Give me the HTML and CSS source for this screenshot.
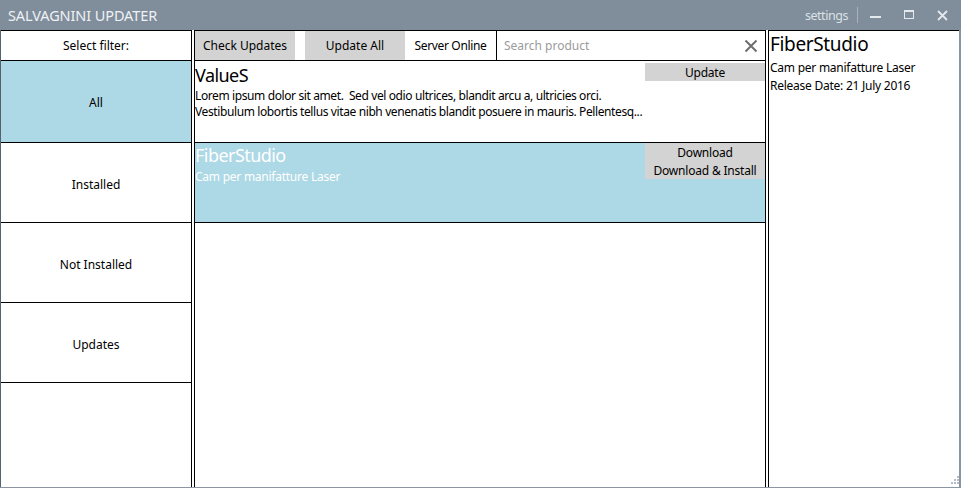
FILE: index.html
```html
<!DOCTYPE html>
<html>
<head>
<meta charset="utf-8">
<title>Salvagnini Updater</title>
<link rel="stylesheet" href="styles.css">
</head>
<body>
<div class="window">
  <header class="titlebar">
    <div class="app-title">SALVAGNINI UPDATER</div>
    <div class="window-controls">
      <span class="settings">settings</span>
      <span class="sep"></span>
      <span class="ctl ctl-min"><span class="min-bar"></span></span>
      <span class="ctl ctl-max"><span class="max-box"></span></span>
      <span class="ctl ctl-close">
        <svg width="11" height="11" viewBox="0 0 11 11"><path d="M1 1 L10 10 M10 1 L1 10" stroke="#e4e9ee" stroke-width="1.8" fill="none"/></svg>
      </span>
    </div>
  </header>
  <main class="content">
    <section class="panel filters">
      <div class="filter-head">Select filter:</div>
      <div class="filter-item first selected">All</div>
      <div class="filter-item">Installed</div>
      <div class="filter-item">Not Installed</div>
      <div class="filter-item">Updates</div>
    </section>
    <section class="panel products">
      <div class="toolbar">
        <button class="tb-btn">Check Updates</button>
        <span class="tb-gap"></span>
        <button class="tb-btn">Update All</button>
        <span class="server">Server Online</span>
        <div class="search">
          <span class="search-ph">Search product</span>
          <svg class="search-x" width="14" height="14" viewBox="0 0 14 14"><path d="M1.5 1.5 L12.5 12.5 M12.5 1.5 L1.5 12.5" stroke="#6e6e6e" stroke-width="2" fill="none"/></svg>
        </div>
      </div>
      <div class="product first">
        <div class="p-text">
          <div class="p-title">ValueS</div>
          <div class="p-line tight">Lorem ipsum dolor sit amet.&nbsp; Sed vel odio ultrices, blandit arcu a, ultricies orci.</div>
          <div class="p-line tight">Vestibulum lobortis tellus vitae nibh venenatis blandit posuere in mauris. Pellentesq...</div>
        </div>
        <div class="p-actions">
          <button class="act">Update</button>
        </div>
      </div>
      <div class="product selected">
        <div class="p-text">
          <div class="p-title">FiberStudio</div>
          <div class="p-line sub">Cam per manifatture Laser</div>
        </div>
        <div class="p-actions">
          <button class="act">Download</button>
          <button class="act">Download &amp; Install</button>
        </div>
      </div>
    </section>
    <section class="panel details">
      <div class="d-title">FiberStudio</div>
      <div class="d-line first">Cam per manifatture Laser</div>
      <div class="d-line">Release Date: 21 July 2016</div>
      <div class="grip">
        <svg width="10" height="10" viewBox="0 0 10 10" fill="#b6bcc6">
          <rect x="8" y="0" width="2" height="2"/>
          <rect x="5" y="3" width="2" height="2"/><rect x="8" y="3" width="2" height="2"/>
          <rect x="2" y="6" width="2" height="2"/><rect x="5" y="6" width="2" height="2"/><rect x="8" y="6" width="2" height="2"/>
        </svg>
      </div>
    </section>
  </main>
</div>
</body>
</html>
```
FILE: styles.css
```css
* { box-sizing: border-box; }
html, body { margin: 0; padding: 0; }
body {
  width: 961px;
  height: 488px;
  overflow: hidden;
  font-family: "Noto Sans", "Open Sans", sans-serif;
  font-size: 12px;
  color: #000;
  background: #fff;
}
.window {
  width: 961px;
  height: 488px;
  background: #8a95a1;
  display: flex;
  flex-direction: column;
}
.titlebar {
  height: 30px;
  background: #808d9a;
  display: flex;
  align-items: center;
  justify-content: space-between;
  flex: 0 0 30px;
}
.app-title {
  padding-left: 8px;
  font-size: 14.5px;
  color: #eef2f6;
  letter-spacing: -0.1px;
  line-height: 30px;
}
.window-controls {
  display: flex;
  align-items: center;
  height: 30px;
}
.settings {
  font-size: 12.5px;
  color: #dae1e7;
  letter-spacing: -0.45px;
  margin-right: 9px;
}
.sep {
  width: 1px;
  height: 16px;
  background: #a9b3bd;
  margin-right: 12px;
}
.ctl {
  display: flex;
  align-items: center;
  justify-content: center;
  height: 30px;
}
.ctl-min { width: 11px; margin-right: 23px; }
.min-bar { display: block; width: 11px; height: 2px; background: #e4e9ee; margin-top: 3px; }
.ctl-max { width: 10px; margin-right: 23px; }
.max-box { display: block; width: 10px; height: 9px; border: 1px solid #e4e9ee; border-top-width: 2px; margin-top: -2px; }
.ctl-close { width: 11px; margin-right: 13px; }

.content {
  flex: 1;
  margin: 0 2px 1px 0;
  border-left: 1px solid #56636f;
  background: #fff;
  display: grid;
  grid-template-columns: 191px 572px 191px;
  column-gap: 2px;
}
.panel {
  border-top: 1px solid #000;
  overflow: hidden;
  position: relative;
}
.filters { border-right: 1px solid #000; }
.products { border-left: 1px solid #000; border-right: 1px solid #000; }
.details { border-left: 1px solid #000; padding-left: 1px; }

.filter-head {
  height: 30px;
  border-bottom: 1px solid #000;
  display: flex;
  align-items: center;
  justify-content: center;
}
.filter-item {
  height: 80px;
  padding-top: 3px;
  border-bottom: 1px solid #000;
  display: flex;
  align-items: center;
  justify-content: center;
}
.filter-item.first { height: 82px; padding-top: 2px; }
.filter-item.selected { background: #add8e6; }

.toolbar {
  height: 30px;
  border-bottom: 1px solid #000;
  display: flex;
  align-items: stretch;
}
.tb-btn {
  width: 100px;
  border: 0;
  margin: 0;
  padding: 0;
  background: #d3d3d3;
  font-family: inherit;
  font-size: 12px;
  color: #000;
}
.tb-gap { width: 10px; }
.server {
  width: 92px;
  display: flex;
  align-items: center;
  justify-content: center;
  border-right: 1px solid #000;
  letter-spacing: -0.35px;
}
.search {
  flex: 1;
  display: flex;
  align-items: center;
  justify-content: space-between;
  padding: 0 7px 0 7px;
}
.search-ph { color: #9b9b9b; }
.search-x { display: block; }

.product {
  height: 80px;
  border-bottom: 1px solid #000;
  display: flex;
}
.product.first { height: 82px; padding-top: 2px; }
.product.selected { background: #add8e6; color: #fff; }
.p-text {
  width: 450px;
  overflow: hidden;
}
.p-title {
  font-size: 18px;
  line-height: 25px;
  letter-spacing: -0.55px;
}
.p-line {
  line-height: 16px;
  white-space: nowrap;
  overflow: hidden;
  letter-spacing: -0.25px;
}
.p-line.tight { letter-spacing: -0.39px; }
.p-line.sub { margin-top: 1px; }
.p-actions {
  width: 120px;
  display: flex;
  flex-direction: column;
}
.act {
  height: 18px;
  border: 0;
  margin: 0;
  padding: 0;
  background: #d3d3d3;
  font-family: inherit;
  font-size: 12px;
  color: #000;
  letter-spacing: -0.2px;
}

.d-title {
  font-size: 19px;
  line-height: 27px;
  letter-spacing: -0.35px;
}
.d-line {
  line-height: 18px;
  letter-spacing: -0.25px;
}
.d-line.first { margin-top: 1px; }
.grip {
  position: absolute;
  right: 0;
  bottom: 1px;
  line-height: 0;
}
```
